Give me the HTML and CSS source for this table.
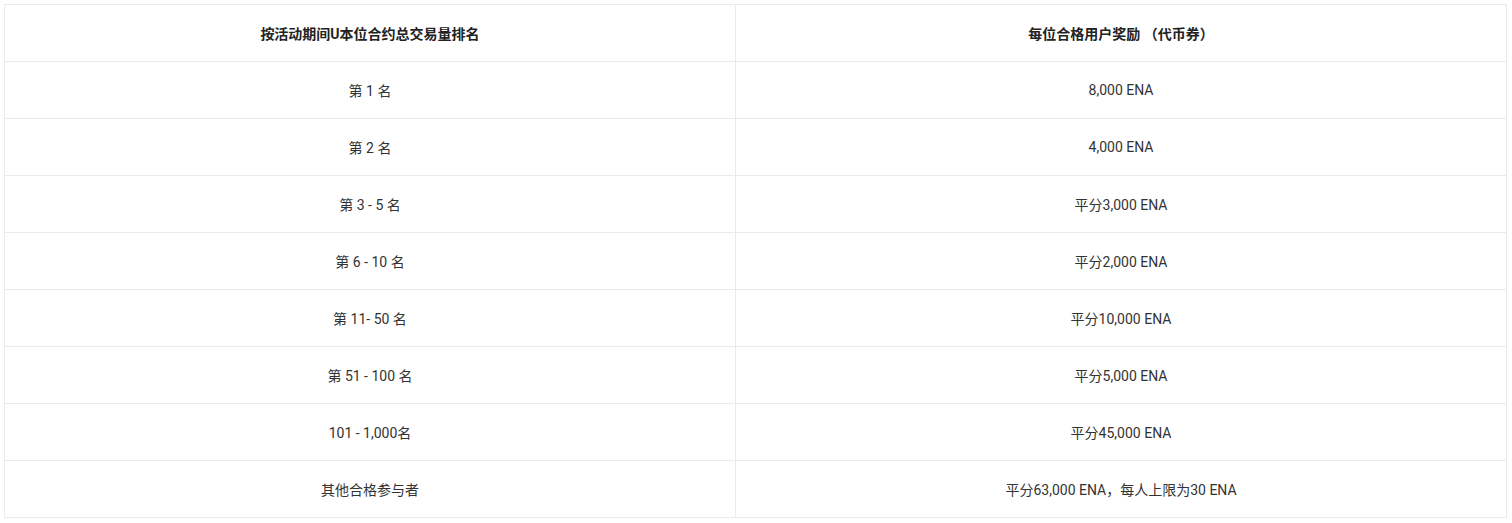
FILE: index.html
```html
<!DOCTYPE html>
<html lang="zh-CN">
<head>
<meta charset="utf-8">
<title>奖励表</title>
<link rel="stylesheet" href="styles.css">
</head>
<body>
<div class="wrap">
<table class="rewards">
  <thead>
    <tr><th class="col-rank">按活动期间U本位合约总交易量排名</th><th class="col-prize">每位合格用户奖励 （代币券）</th></tr>
  </thead>
  <tbody>
    <tr><td>第 1 名</td><td>8,000 ENA</td></tr>
    <tr><td>第 2 名</td><td>4,000 ENA</td></tr>
    <tr><td>第 3 - 5 名</td><td>平分3,000 ENA</td></tr>
    <tr><td>第 6 - 10 名</td><td>平分2,000 ENA</td></tr>
    <tr><td>第 11- 50 名</td><td>平分10,000 ENA</td></tr>
    <tr><td>第 51 - 100 名</td><td>平分5,000 ENA</td></tr>
    <tr><td>101 - 1,000名</td><td>平分45,000 ENA</td></tr>
    <tr><td>其他合格参与者</td><td>平分63,000 ENA，每人上限为30 ENA</td></tr>
  </tbody>
</table>
</div>
</body>
</html>
```
FILE: styles.css
```css
html, body {
  margin: 0;
  padding: 0;
  background: #ffffff;
}
.wrap {
  padding: 4px;
}
.rewards {
  width: 1502px;
  border-collapse: collapse;
  table-layout: fixed;
  font-family: Roboto, "Noto Sans CJK SC", sans-serif;
  font-size: 14px;
  color: #333333;
}
.rewards th, .rewards td {
  border: 1px solid #eaeaee;
  height: 57px;
  padding: 0 8px;
  text-align: center;
  vertical-align: middle;
  box-sizing: border-box;
}
.rewards th {
  font-weight: 700;
  color: #222222;
}
.col-rank { width: 731px; }
.col-prize { width: 771px; }
```
